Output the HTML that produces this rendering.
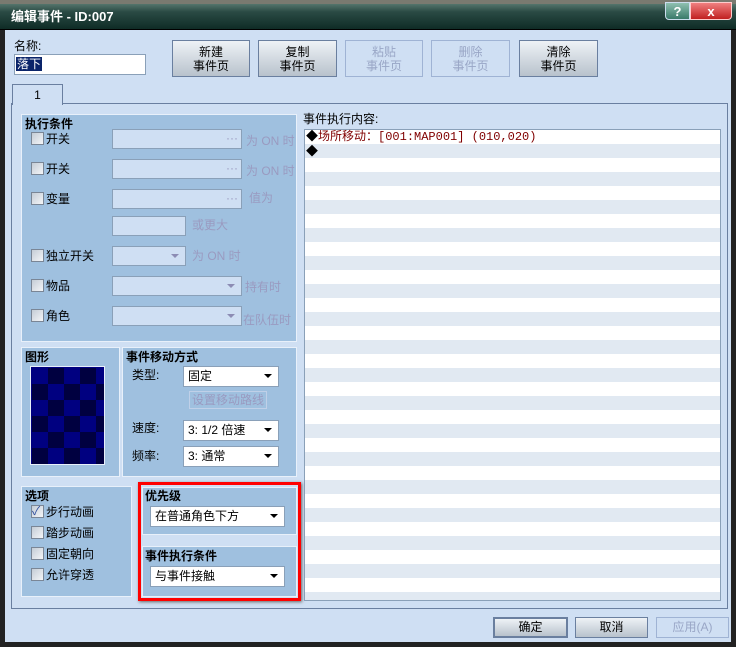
<!DOCTYPE html>
<html><head><meta charset="utf-8"><style>
*{margin:0;padding:0;box-sizing:border-box}
body{width:736px;height:647px;background:#cfdff3;position:relative;overflow:hidden;font-family:"Liberation Sans","Noto Sans CJK SC",sans-serif;font-size:12px;color:#000}
.a{position:absolute}
.t{position:absolute;white-space:nowrap;line-height:14px}
.btn{position:absolute;border:1px solid #6a7f9f;background:linear-gradient(#eef2f6,#b8c2cc);text-align:center;font-size:12px;line-height:14px}
.btn.d{border-color:#9fb3d4;background:#cfdff3;color:#99a6c6}
.grp{position:absolute;background:#9fc0df;border:1px solid #e8f0fa}
.b{font-weight:bold}
.cb{position:absolute;width:13px;height:13px;border:1px solid #7a8696;background:linear-gradient(135deg,#c4ccd6,#f4f6f8)}
.fld{position:absolute;border:1px solid #8aa0b8;background:#cfdff3}
.dim{color:#9a9ac0}
.sel{position:absolute;background:#fff;border:1px solid #8aa0b8;line-height:18px;padding-left:4px}
.arr{position:absolute;right:6px;top:7px;width:0;height:0;border-left:4px solid transparent;border-right:4px solid transparent;border-top:4px solid #000}
.arr.g{border-top-color:#8c8cb4}
</style></head><body>
<div class="a" style="left:0;top:0;width:736px;height:30px;background:linear-gradient(#6a8a80,#2a4a44 40%,#0d2a24)"></div>
<div class="a" style="left:0;top:0;width:736px;height:4px;background:#7a7a70"></div>
<div class="t" style="left:11px;top:10px;color:#fff;font-weight:bold;font-size:13px">编辑事件 - ID:007</div>
<div class="a" style="left:665px;top:2px;width:25px;height:18px;border:1px solid #cde;border-radius:0 0 0 4px;background:linear-gradient(#8fc0b0,#3a7a6a);color:#fff;text-align:center;font-weight:bold;font-size:13px;line-height:17px">?</div>
<div class="a" style="left:690px;top:2px;width:42px;height:18px;border:1px solid #fcc;border-radius:0 0 4px 0;background:linear-gradient(#f08080,#c02020);color:#fff;text-align:center;font-weight:bold;font-size:13px;line-height:17px">x</div>
<div class="a" style="left:0;top:29px;width:5px;height:618px;background:#222"></div>
<div class="a" style="left:731px;top:29px;width:5px;height:618px;background:#222"></div>
<div class="a" style="left:0;top:642px;width:736px;height:5px;background:#222"></div>
<div class="a" style="left:0;top:29px;width:736px;height:1px;background:#000"></div>

<div class="t" style="left:14px;top:39px">名称:</div>
<div class="a" style="left:14px;top:54px;width:132px;height:21px;background:#fff;border:1px solid #8aa0b8"></div>
<div class="t" style="left:16px;top:57px;background:#0a246a;color:#fff;padding:0 1px">落下</div>

<div class="btn" style="left:172px;top:40px;width:78px;height:37px;padding-top:4px">新建<br>事件页</div>
<div class="btn" style="left:258px;top:40px;width:79px;height:37px;padding-top:4px">复制<br>事件页</div>
<div class="btn d" style="left:345px;top:40px;width:78px;height:37px;padding-top:4px">粘贴<br>事件页</div>
<div class="btn d" style="left:431px;top:40px;width:79px;height:37px;padding-top:4px">删除<br>事件页</div>
<div class="btn" style="left:519px;top:40px;width:79px;height:37px;padding-top:4px">清除<br>事件页</div>

<div class="a" style="left:11px;top:103px;width:717px;height:506px;border:1px solid #6a7fa0"></div>
<div class="a" style="left:12px;top:84px;width:51px;height:21px;border:1px solid #6a7fa0;border-bottom:none;background:#cfdff3;text-align:center;line-height:20px">1</div>

<div class="grp" style="left:21px;top:114px;width:276px;height:228px"></div>
<div class="t b" style="left:25px;top:117px">执行条件</div>
<div class="cb" style="left:31px;top:132px"></div><div class="t" style="left:46px;top:132px">开关</div>
<div class="fld" style="left:112px;top:129px;width:130px;height:20px"><span class="t dim" style="right:3px;top:1px">···</span></div><div class="t dim" style="left:246px;top:134px">为 ON 时</div>
<div class="cb" style="left:31px;top:162px"></div><div class="t" style="left:46px;top:162px">开关</div>
<div class="fld" style="left:112px;top:159px;width:130px;height:20px"><span class="t dim" style="right:3px;top:1px">···</span></div><div class="t dim" style="left:246px;top:164px">为 ON 时</div>
<div class="cb" style="left:31px;top:192px"></div><div class="t" style="left:46px;top:192px">变量</div>
<div class="fld" style="left:112px;top:189px;width:130px;height:20px"><span class="t dim" style="right:3px;top:1px">···</span></div><div class="t dim" style="left:249px;top:191px">值为</div>
<div class="fld" style="left:112px;top:216px;width:74px;height:20px"></div><div class="t dim" style="left:192px;top:218px">或更大</div>
<div class="cb" style="left:31px;top:249px"></div><div class="t" style="left:46px;top:249px">独立开关</div>
<div class="fld" style="left:112px;top:246px;width:74px;height:20px"><div class="arr g"></div></div><div class="t dim" style="left:192px;top:249px">为 ON 时</div>
<div class="cb" style="left:31px;top:279px"></div><div class="t" style="left:46px;top:279px">物品</div>
<div class="fld" style="left:112px;top:276px;width:130px;height:20px"><div class="arr g"></div></div><div class="t dim" style="left:245px;top:280px">持有时</div>
<div class="cb" style="left:31px;top:309px"></div><div class="t" style="left:46px;top:309px">角色</div>
<div class="fld" style="left:112px;top:306px;width:130px;height:20px"><div class="arr g"></div></div><div class="t dim" style="left:243px;top:313px">在队伍时</div>

<div class="grp" style="left:21px;top:347px;width:99px;height:130px"></div>
<div class="t b" style="left:25px;top:350px">图形</div>
<div class="a" style="left:30px;top:366px;width:75px;height:99px;border:1px solid #e8f0fa;background:#000080;overflow:hidden">
<svg width="75" height="99" style="position:absolute;left:1px;top:1px"><defs><pattern id="p" width="32" height="32" patternUnits="userSpaceOnUse"><rect x="16" width="16" height="16" fill="#000040"/><rect y="16" width="16" height="16" fill="#000040"/></pattern></defs><rect x="0" y="0" width="72" height="96" fill="url(#p)"/></svg></div>

<div class="grp" style="left:122px;top:347px;width:175px;height:130px"></div>
<div class="t b" style="left:126px;top:350px">事件移动方式</div>
<div class="t" style="left:132px;top:368px">类型:</div>
<div class="sel" style="left:183px;top:366px;width:96px;height:21px">固定<div class="arr"></div></div>
<div class="a dim" style="left:189px;top:391px;width:78px;height:18px;border:1px solid #c0d0e8;text-align:center;line-height:16px">设置移动路线</div>
<div class="t" style="left:132px;top:421px">速度:</div>
<div class="sel" style="left:183px;top:420px;width:96px;height:21px">3: 1/2 倍速<div class="arr"></div></div>
<div class="t" style="left:132px;top:449px">频率:</div>
<div class="sel" style="left:183px;top:446px;width:96px;height:21px">3: 通常<div class="arr"></div></div>

<div class="grp" style="left:21px;top:486px;width:111px;height:111px"></div>
<div class="t b" style="left:25px;top:489px">选项</div>
<div class="cb" style="left:31px;top:505px"><span class="t" style="left:0;top:-2px;color:#3050a0;font-size:12px">✓</span></div><div class="t" style="left:46px;top:505px">步行动画</div>
<div class="cb" style="left:31px;top:526px"></div><div class="t" style="left:46px;top:526px">踏步动画</div>
<div class="cb" style="left:31px;top:547px"></div><div class="t" style="left:46px;top:547px">固定朝向</div>
<div class="cb" style="left:31px;top:568px"></div><div class="t" style="left:46px;top:568px">允许穿透</div>

<div class="a" style="left:138px;top:482px;width:163px;height:119px;border:3px solid #f00;box-shadow:1px 1px 3px #666"></div>
<div class="grp" style="left:142px;top:487px;width:155px;height:48px"></div>
<div class="t b" style="left:145px;top:489px">优先级</div>
<div class="sel" style="left:150px;top:506px;width:135px;height:21px">在普通角色下方<div class="arr"></div></div>
<div class="grp" style="left:142px;top:546px;width:155px;height:51px"></div>
<div class="t b" style="left:145px;top:549px">事件执行条件</div>
<div class="sel" style="left:150px;top:566px;width:135px;height:21px">与事件接触<div class="arr"></div></div>

<div class="t" style="left:303px;top:112px">事件执行内容:</div>
<div class="a" style="left:304px;top:129px;width:417px;height:472px;border:1px solid #8aa0b8;background:repeating-linear-gradient(#fff 0 14px,#e1e9f2 14px 28px)">
<div class="t" style="left:1px;top:0;color:#800000;font-family:'Liberation Mono','Noto Sans CJK SC',monospace"><span style="color:#000">◆</span>场所移动：[001:MAP001] (010,020)</div>
<div class="t" style="left:1px;top:14px">◆</div>
</div>

<div class="btn" style="left:493px;top:617px;width:75px;height:21px;border:2px solid #6a7f9f;line-height:17px">确定</div>
<div class="btn" style="left:575px;top:617px;width:73px;height:21px;line-height:19px">取消</div>
<div class="btn d" style="left:656px;top:617px;width:73px;height:21px;line-height:19px">应用(A)</div>
</body></html>
